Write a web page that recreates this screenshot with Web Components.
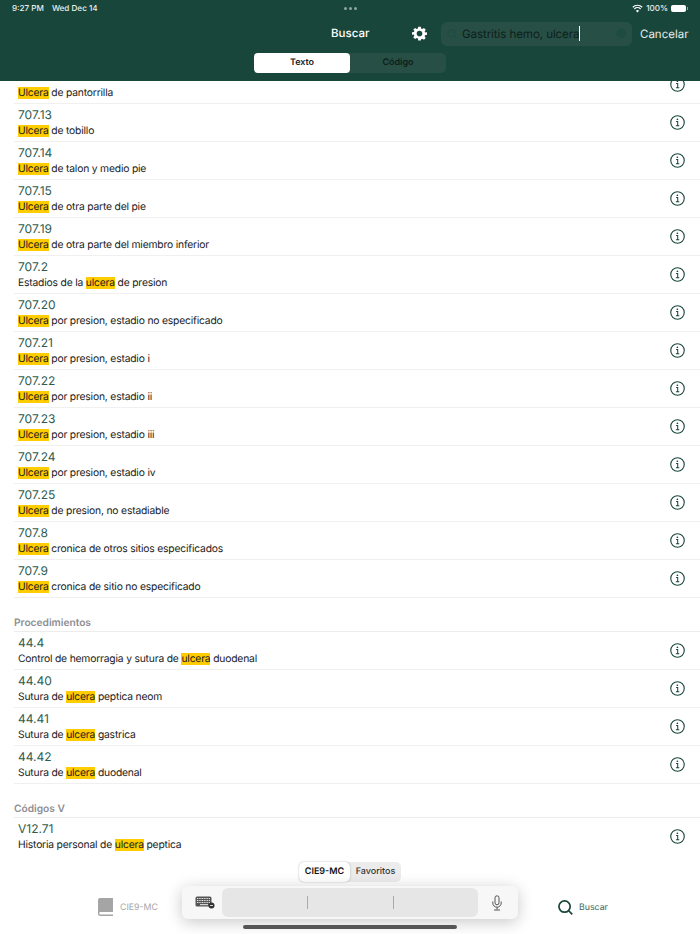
<!DOCTYPE html>
<html lang="es">
<head>
<meta charset="utf-8">
<title>Buscar</title>
<style>
  html, body { margin: 0; padding: 0; background: #fff; }
  body {
    width: 700px;
    height: 934px;
    overflow: hidden;
    font-family: Inter, "Liberation Sans", sans-serif;
    text-rendering: geometricPrecision;
  }
</style>
</head>
<body>
<search-app>
  <code-section>
    <code-row code=""><code-hit>Ulcera</code-hit> de pantorrilla</code-row>
    <code-row code="707.13"><code-hit>Ulcera</code-hit> de tobillo</code-row>
    <code-row code="707.14"><code-hit>Ulcera</code-hit> de talon y medio pie</code-row>
    <code-row code="707.15"><code-hit>Ulcera</code-hit> de otra parte del pie</code-row>
    <code-row code="707.19"><code-hit>Ulcera</code-hit> de otra parte del miembro inferior</code-row>
    <code-row code="707.2">Estadios de la <code-hit>ulcera</code-hit> de presion</code-row>
    <code-row code="707.20"><code-hit>Ulcera</code-hit> por presion, estadio no especificado</code-row>
    <code-row code="707.21"><code-hit>Ulcera</code-hit> por presion, estadio i</code-row>
    <code-row code="707.22"><code-hit>Ulcera</code-hit> por presion, estadio ii</code-row>
    <code-row code="707.23"><code-hit>Ulcera</code-hit> por presion, estadio iii</code-row>
    <code-row code="707.24"><code-hit>Ulcera</code-hit> por presion, estadio iv</code-row>
    <code-row code="707.25"><code-hit>Ulcera</code-hit> de presion, no estadiable</code-row>
    <code-row code="707.8"><code-hit>Ulcera</code-hit> cronica de otros sitios especificados</code-row>
    <code-row code="707.9"><code-hit>Ulcera</code-hit> cronica de sitio no especificado</code-row>
  </code-section>
  <code-section title="Procedimientos">
    <code-row code="44.4">Control de hemorragia y sutura de <code-hit>ulcera</code-hit> duodenal</code-row>
    <code-row code="44.40">Sutura de <code-hit>ulcera</code-hit> peptica neom</code-row>
    <code-row code="44.41">Sutura de <code-hit>ulcera</code-hit> gastrica</code-row>
    <code-row code="44.42">Sutura de <code-hit>ulcera</code-hit> duodenal</code-row>
  </code-section>
  <code-section title="Códigos V">
    <code-row code="V12.71">Historia personal de <code-hit>ulcera</code-hit> peptica</code-row>
  </code-section>
</search-app>

<script>
// shared green used by header, codes and icons
const GREEN = '#19463b';

class CodeHit extends HTMLElement {
  connectedCallback() {
    this.attachShadow({ mode: 'open' });
    // no whitespace around the slot, it would get highlighted too
    this.shadowRoot.innerHTML = `<style>:host { display: inline; background: #ffcc00; }</style><slot></slot>`;
  }
}
customElements.define('code-hit', CodeHit);

class CodeRow extends HTMLElement {
  connectedCallback() {
    this.attachShadow({ mode: 'open' });
    this.shadowRoot.innerHTML = `
      <style>
        :host {
          display: flex;
          align-items: center;
          height: 38px;
          box-sizing: border-box;
          padding: 0 15px 0 4px;
          border-bottom: 1.5px solid #f0f0f0;
        }
        .text { flex: 1; min-width: 0; margin-bottom: 2px; }
        .code { font-size: 12px; line-height: 19px; color: #2f5c4f; height: 19px; }
        .desc { font-size: 10.3px; letter-spacing: -.18px; line-height: 15px; color: #1a1a1a; }
        svg { display: block; width: 15px; height: 15px; flex: none; }
      </style>
      <div class="text">
        <div class="code">${this.getAttribute('code')}</div>
        <div class="desc"><slot></slot></div>
      </div>
      <svg viewBox="0 0 16 16" fill="none" stroke="${GREEN}">
        <circle cx="8" cy="8" r="7.2" stroke-width="1.2"/>
        <circle cx="7.9" cy="4.5" r=".9" fill="${GREEN}" stroke="none"/>
        <path d="M6.5 7h1.7v4.4M6.3 11.5h3.6" stroke-width="1.1"/>
      </svg>
    `;
  }
}
customElements.define('code-row', CodeRow);

class CodeSection extends HTMLElement {
  connectedCallback() {
    this.attachShadow({ mode: 'open' });
    const title = this.getAttribute('title');
    this.shadowRoot.innerHTML = `
      <style>
        :host { display: block; }
        .title {
          height: 34px;
          box-sizing: border-box;
          padding-top: 18px;
          font-size: 10.2px;
          line-height: 14px;
          font-weight: 600;
          color: #8e8e93;
          border-bottom: 1.5px solid #ececec;
        }
      </style>
      ${title ? `<div class="title">${title}</div>` : ''}
      <slot></slot>
    `;
  }
}
customElements.define('code-section', CodeSection);

class StatusBar extends HTMLElement {
  connectedCallback() {
    this.attachShadow({ mode: 'open' });
    this.shadowRoot.innerHTML = `
      <style>
        :host {
          display: grid;
          grid-template-columns: 1fr auto 1fr;
          align-items: center;
          height: 16px;
          padding: 0 12px;
          color: #e9efed;
          font-size: 8.1px;
          font-weight: 500;
        }
        .left { display: flex; gap: 8px; }
        .dots { display: flex; gap: 2px; }
        .dots i { width: 3px; height: 3px; border-radius: 50%; background: #8da59d; }
        .right { display: flex; justify-content: flex-end; align-items: center; gap: 3px; }
        .battery { display: flex; align-items: center; gap: 1px; }
        .battery b { display: block; width: 15px; height: 7px; border-radius: 2px; background: #fff; }
        .battery i { display: block; width: 1px; height: 3px; background: #8da59d; }
      </style>
      <div class="left"><span>9:27 PM</span><span>Wed Dec 14</span></div>
      <div class="dots"><i></i><i></i><i></i></div>
      <div class="right">
        <svg width="11" height="9" viewBox="0 0 11 9" fill="none" stroke="#fff" stroke-width="1.2">
          <path d="M.8 3.2a6.7 6.7 0 0 1 9.4 0M2.4 5a4.4 4.4 0 0 1 6.2 0"/>
          <path d="M5.5 8.6 3.9 6.7a2.3 2.3 0 0 1 3.2 0z" fill="#fff" stroke="none"/>
        </svg>
        <span>100%</span>
        <span class="battery"><b></b><i></i></span>
      </div>
    `;
  }
}
customElements.define('status-bar', StatusBar);

class SearchHeader extends HTMLElement {
  connectedCallback() {
    this.attachShadow({ mode: 'open' });
    this.shadowRoot.innerHTML = `
      <style>
        :host {
          display: block;
          position: relative;
          z-index: 1;
          height: 81px;
          background: ${GREEN};
        }
        .nav {
          display: flex;
          align-items: center;
          height: 29px;
          margin-top: 3px;
          padding-left: 331px;
        }
        h1 { margin: 0; width: 81px; font-size: 11.5px; font-weight: 500; color: #fff; line-height: 17px; }
        .gear { display: block; flex: none; }
        .field {
          display: flex;
          align-items: center;
          width: 191px;
          height: 24px;
          margin-left: 14px;
          border-radius: 6px;
          background: #274f45;
          box-sizing: border-box;
          padding: 0 5px 0 6px;
          color: #0d1f1a;
          font-size: 11.6px;
          letter-spacing: -.1px;
        }
        .field svg { flex: none; }
        .value { flex: 1; margin-left: 5px; white-space: nowrap; }
        .caret { display: inline-block; width: 1px; height: 15px; background: #fff; vertical-align: -3px; }
        .cancel { margin-left: 8px; color: #e8eeec; font-size: 11.5px; }
        .seg {
          display: flex;
          width: 192px;
          height: 20px;
          margin: 5px auto 0;
          box-sizing: border-box;
          border-radius: 5px;
          background: #274f45;
          font-size: 9px;
          font-weight: 600;
          color: #0d2019;
          text-align: center;
          line-height: 20px;
        }
        .seg span { flex: 1; border-radius: 4px; }
        .seg .on { background: #fff; color: #222; }
      </style>
      <status-bar></status-bar>
      <div class="nav">
        <h1>Buscar</h1>
        <svg class="gear" width="15" height="15" viewBox="0 0 24 24" fill="#fff">
          <path fill-rule="evenodd" d="M10 1h4l.6 3.100 1.900.8 2.700-1.700 2.800 2.800-1.700 2.600.8 1.900L24 10v4l-3.100.6-.8 1.900 1.800 2.700-2.800 2.800-2.600-1.700-1.900.8L14 23h-4l-.6-3.100-1.900-.8-2.700 1.700L2 18l1.700-2.600-.8-1.900L0 14v-4l3.100-.6.8-1.900L2 6l2.800-2.800 2.700 1.700 1.900-.8zM12 7.500a4.500 4.500 0 1 0 0 9 4.500 4.500 0 0 0 0-9z"/>
        </svg>
        <div class="field">
          <svg width="10" height="10" viewBox="0 0 13 13" fill="none" stroke="#1f4c40" stroke-width="1.5">
            <circle cx="5.500" cy="5.500" r="4.500"/><path d="m8.800 8.800 3.500 3.500"/>
          </svg>
          <span class="value">Gastritis hemo, ulcera<span class="caret"></span></span>
          <svg width="11" height="11" viewBox="0 0 12 12"><circle cx="6" cy="6" r="5.500" fill="#1f4c40"/></svg>
        </div>
        <span class="cancel">Cancelar</span>
      </div>
      <div class="seg"><span class="on">Texto</span><span>Código</span></div>
    `;
  }
}
customElements.define('search-header', SearchHeader);

class KeyboardBar extends HTMLElement {
  connectedCallback() {
    this.attachShadow({ mode: 'open' });
    this.shadowRoot.innerHTML = `
      <style>
        :host {
          position: absolute;
          left: 182px;
          top: 31px;
          width: 336px;
          height: 33px;
          display: flex;
          align-items: center;
          box-sizing: border-box;
          padding: 2px 15px 2px 13px;
          background: #f7f7f7;
          border-radius: 6px;
          box-shadow: 0 3px 16px rgba(0,0,0,.22);
        }
        .well {
          flex: 1;
          height: 29px;
          margin: 0 13px 0 7px;
          border-radius: 6px;
          background: #e6e6e6;
          display: grid;
          grid-template-columns: repeat(3, 1fr);
        }
        .well i + i { border-left: 1px solid #aaa; height: 13px; align-self: center; }
        svg { display: block; flex: none; }
      </style>
      <svg width="20" height="13" viewBox="0 0 20 13">
        <rect x=".5" y=".5" width="16" height="10" rx="1.500" fill="#555"/>
        <path d="M2 2.500h13M2 4.500h13M2 6.500h13" stroke="#eee" stroke-width="1" stroke-dasharray="1 .7"/>
        <path d="M5 8.700h8" stroke="#eee"/>
        <circle cx="16.500" cy="9.500" r="3" fill="#333"/>
        <path d="M15 9.500h3" stroke="#fff" stroke-width=".8"/>
      </svg>
      <div class="well"><i></i><i></i><i></i></div>
      <svg width="12" height="16" viewBox="0 0 12 16" fill="none" stroke="#555" stroke-width="1">
        <rect x="4" y=".8" width="4" height="9" rx="2"/>
        <path d="M1.800 6.500v1.500a4.200 4.200 0 0 0 8.400 0V6.500M6 12.200v2.300M3 15h6"/>
      </svg>
    `;
  }
}
customElements.define('keyboard-bar', KeyboardBar);

class BottomBar extends HTMLElement {
  connectedCallback() {
    this.attachShadow({ mode: 'open' });
    this.shadowRoot.innerHTML = `
      <style>
        :host {
          display: block;
          position: relative;
          height: 79px;
          background: #fff;
          font-size: 8.8px;
        }
        .tabs {
          display: flex;
          align-items: center;
          height: 79px;
          padding: 25px 0 0 98px;
          box-sizing: border-box;
        }
        .tab { display: flex; align-items: center; gap: 7px; color: #a5a5a5; }
        .tab.on { gap: 6px; margin-left: 400px; color: #3d6559; }
        .pills {
          position: absolute;
          left: 299px;
          top: 7px;
          display: flex;
          width: 102px;
          height: 20px;
          background: #ececec;
          border-radius: 5px;
          font-size: 9px;
          font-weight: 500;
          color: #333;
          line-height: 20px;
          text-align: center;
        }
        .pills span:first-child {
          width: 51px;
          background: #fff;
          border-radius: 5px;
          box-shadow: 0 0 2px rgba(0,0,0,.3);
          color: #111;
          font-weight: 600;
        }
        .pills span:last-child { flex: 1; }
        .home {
          position: absolute;
          left: 243px;
          top: 70px;
          width: 214px;
          height: 4px;
          border-radius: 2px;
          background: #555;
        }
      </style>
      <div class="tabs">
        <div class="tab">
          <svg width="15" height="18" viewBox="0 0 15 18">
            <path d="M2 0h13v14H2.500a1.200 1.200 0 0 0 0 2.500H15V18H2.500A2.500 2.500 0 0 1 0 15.500V2a2 2 0 0 1 2-2z" fill="#a5a5a5"/>
          </svg>
          <span>CIE9-MC</span>
        </div>
        <div class="tab on">
          <svg width="15" height="15" viewBox="0 0 16 16" fill="none" stroke="${GREEN}" stroke-width="1.800">
            <circle cx="7" cy="7" r="6"/><path d="m11.200 11.200 4 4.200"/>
          </svg>
          <span>Buscar</span>
        </div>
      </div>
      <div class="pills"><span>CIE9-MC</span><span>Favoritos</span></div>
      <keyboard-bar></keyboard-bar>
      <div class="home"></div>
    `;
  }
}
customElements.define('bottom-bar', BottomBar);

class SearchApp extends HTMLElement {
  connectedCallback() {
    this.attachShadow({ mode: 'open' });
    this.shadowRoot.innerHTML = `
      <style>
        :host {
          display: flex;
          flex-direction: column;
          width: 700px;
          height: 934px;
          overflow: hidden;
        }
        .list { flex: 1; min-height: 0; overflow: hidden; padding-left: 14px; margin-top: -15px; }
      </style>
      <search-header></search-header>
      <div class="list"><slot></slot></div>
      <bottom-bar></bottom-bar>
    `;
  }
}
customElements.define('search-app', SearchApp);
</script>
</body>
</html>
